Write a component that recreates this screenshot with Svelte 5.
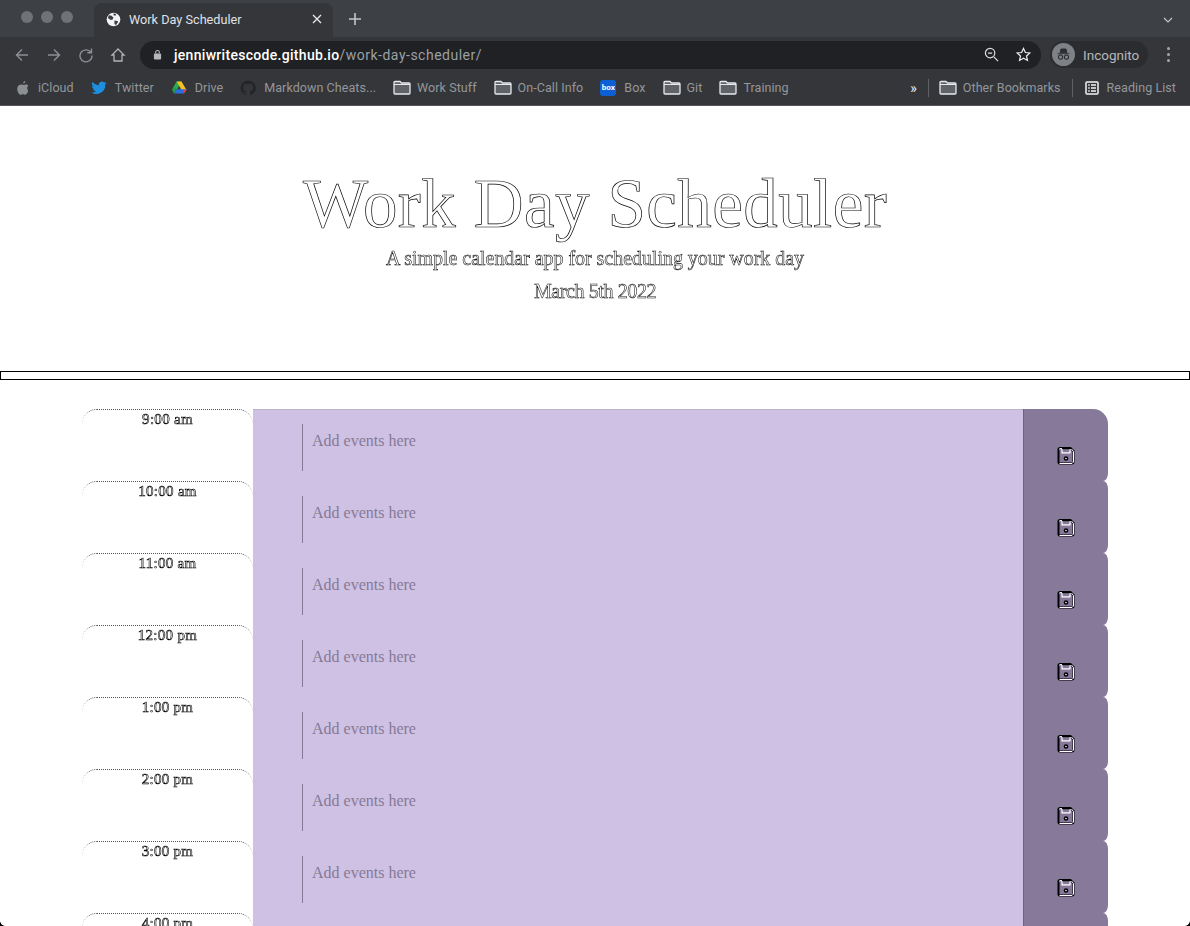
<script>
  const bookmarks = [
    { name: "iCloud", icon: "apple" },
    { name: "Twitter", icon: "twitter" },
    { name: "Drive", icon: "drive" },
    { name: "Markdown Cheats...", icon: "github" },
    { name: "Work Stuff", icon: "folder" },
    { name: "On-Call Info", icon: "folder" },
    { name: "Box", icon: "box" },
    { name: "Git", icon: "folder" },
    { name: "Training", icon: "folder" }
  ];
  const hours = ["9:00 am", "10:00 am", "11:00 am", "12:00 pm", "1:00 pm", "2:00 pm", "3:00 pm", "4:00 pm"];
</script>

{#snippet folder()}
  <svg class="bm-icon" viewBox="0 0 18 15" width="18" height="15">
    <path d="M1 2.500a1 1 0 0 1 1-1h5l1.500 1.500H16a1 1 0 0 1 1 1V13a1 1 0 0 1-1 1H2a1 1 0 0 1-1-1z" fill="#5f6368" stroke="#e8eaed" stroke-width="1.300"/>
    <path d="M1 4.500h16" stroke="#e8eaed" stroke-width="1"/>
  </svg>
{/snippet}

<div class="window">
  <div class="tabstrip">
    <div class="lights"><i></i><i></i><i></i></div>
    <div class="tab">
      <svg viewBox="0 0 16 16" width="15" height="15">
        <circle cx="8" cy="8" r="7.300" fill="#f1f3f4"/>
        <path d="M3 3.500l3 .5 2 2-1 2-2 .5-3-2zM9 9l3 .5 1 1-2.500 3.500-1.500-1.500zM8 1.500l3 .5-1 2-2-.5z" fill="#3c4043"/>
      </svg>
      <span class="tab-title">Work Day Scheduler</span>
      <svg class="tab-x" viewBox="0 0 10 10" width="10" height="10"><path d="M1 1l8 8M9 1l-8 8" stroke="#e8eaed" stroke-width="1.300"/></svg>
    </div>
    <svg class="plus" viewBox="0 0 12 12" width="12" height="12"><path d="M6 0v12M0 6h12" stroke="#c4c7c9" stroke-width="1.600"/></svg>
    <svg class="chev" viewBox="0 0 10 6" width="10" height="6"><path d="M1 1l4 4 4-4" fill="none" stroke="#c4c7c9" stroke-width="1.200"/></svg>
  </div>

  <div class="toolbar">
    <svg class="nav" viewBox="0 0 16 16" width="16" height="16"><path d="M14 8H2.500M8 2.500L2.500 8 8 13.500" fill="none" stroke="#8b8f93" stroke-width="1.400"/></svg>
    <svg class="nav" viewBox="0 0 16 16" width="16" height="16"><path d="M2 8h11.500M8 2.500L13.500 8 8 13.500" fill="none" stroke="#8b8f93" stroke-width="1.400"/></svg>
    <svg class="nav" viewBox="0 0 16 16" width="16" height="16"><path d="M13 5.500A6 6 0 1 0 14 8.500M13.500 1.500v4.200H9.300" fill="none" stroke="#8b8f93" stroke-width="1.400"/></svg>
    <svg class="nav" viewBox="0 0 16 16" width="16" height="16"><path d="M8 2L2 8h2v6h8V8h2z" fill="none" stroke="#b0b3b6" stroke-width="1.300"/></svg>
    <div class="omnibox">
      <svg viewBox="0 0 10 12" width="9" height="11"><rect x="1" y="5" width="8" height="6.500" rx="1" fill="#b5b8bb"/><path d="M3 5V3.500a2 2 0 0 1 4 0V5" fill="none" stroke="#b5b8bb" stroke-width="1.200"/></svg>
      <span class="url"><b>jenniwritescode.github.io</b>/work-day-scheduler/</span>
      <svg class="zoom-ic" viewBox="0 0 16 16" width="15" height="15"><circle cx="6.500" cy="6.500" r="5" fill="none" stroke="#dadce0" stroke-width="1.300"/><path d="M10.500 10.500l4.500 4.500M4.300 6.500h4.400" stroke="#dadce0" stroke-width="1.300"/></svg>
      <svg class="star" viewBox="0 0 16 16" width="15" height="15"><path d="M8 1.500l2 4.400 4.700.5-3.500 3.200 1 4.700L8 11.900l-4.200 2.400 1-4.700L1.300 6.400l4.700-.5z" fill="none" stroke="#e8eaed" stroke-width="1.300"/></svg>
    </div>
    <div class="incognito">
      <span class="inc-avatar">
        <svg viewBox="0 0 20 20" width="17" height="17"><path d="M3 9h14M6 8l1-4.500h6L14 8z" fill="#2b2d30" stroke="#2b2d30"/><circle cx="6.500" cy="13" r="2.500" fill="none" stroke="#2b2d30" stroke-width="1.200"/><circle cx="13.500" cy="13" r="2.500" fill="none" stroke="#2b2d30" stroke-width="1.200"/></svg>
      </span>
      <span>Incognito</span>
    </div>
    <div class="dots"><i></i><i></i><i></i></div>
  </div>

  <div class="bookmarks">
    {#each bookmarks as b}
      <span class="bm" class:is-folder={b.icon === "folder"}>
        {#if b.icon === "folder"}
          {@render folder()}
        {:else if b.icon === "apple"}
          <svg class="bm-icon" viewBox="0 0 14 16" width="14" height="15"><path d="M9.500 1c.2 1.500-1 2.800-2.300 2.800C7 2.400 8.200 1.100 9.500 1zM11.500 8.300c0-1.500 1.200-2.200 1.300-2.300-.8-1.100-2-1.300-2.400-1.300-1-.1-2 .6-2.600.6s-1.400-.6-2.300-.6C3 4.700.8 6.200.8 9.500c0 3 2.200 6.200 3.600 6.200.8 0 1.400-.6 2.500-.6s1.500.6 2.500.6c1.400 0 2.900-2.700 3.200-4-.1 0-1.100-1.300-1.100-3.400z" fill="#8d9093"/></svg>
        {:else if b.icon === "twitter"}
          <svg class="bm-icon" viewBox="0 0 16 14" width="16" height="14"><path d="M15.500 2c-.6.300-1.200.4-1.800.5.600-.4 1.100-1 1.400-1.700-.6.400-1.300.6-2 .8A3.100 3.100 0 0 0 7.800 4.400 8.900 8.900 0 0 1 1.400 1.100a3.100 3.100 0 0 0 1 4.200c-.5 0-1-.2-1.400-.4 0 1.500 1 2.800 2.500 3.100-.5.100-.9.100-1.400 0 .4 1.300 1.500 2.100 2.900 2.200A6.300 6.300 0 0 1 .5 11.500 8.900 8.900 0 0 0 14.200 3.600c.5-.4 1-.9 1.300-1.600z" fill="#1d8fe0"/></svg>
        {:else if b.icon === "drive"}
          <svg class="bm-icon" viewBox="0 0 16 14" width="16" height="15"><path d="M5.500 1h5L6 9H1z" fill="#2da94f"/><path d="M10.500 1L15.500 9.500h-5L5.700 1z" fill="#f6bf26"/><path d="M3 13l2.500-4.200h10L13 13z" fill="#2a6ee0"/><path d="M1 9.500L3 13l2.600-4.200-2-2.300z" fill="#1e9e48"/><path d="M13 13l2.500-3.800h-3z" fill="#e8453c"/></svg>
        {:else if b.icon === "github"}
          <svg class="bm-icon" viewBox="0 0 16 16" width="16" height="16"><path d="M8 .5a7.500 7.500 0 0 0-2.400 14.600c.4.100.5-.2.500-.4v-1.300c-2.100.5-2.500-1-2.500-1-.4-.9-.9-1.100-.9-1.100-.7-.5 0-.5 0-.5.800.1 1.200.8 1.200.8.700 1.200 1.800.8 2.300.6.100-.5.300-.8.500-1-1.700-.2-3.400-.8-3.400-3.700 0-.8.300-1.500.8-2-.1-.2-.3-1 .1-2 0 0 .6-.2 2.100.8a7 7 0 0 1 3.800 0c1.500-1 2.100-.8 2.100-.8.400 1 .2 1.800.1 2 .5.500.8 1.200.8 2 0 2.900-1.800 3.500-3.400 3.700.3.200.5.700.5 1.400v2.100c0 .2.100.5.500.4A7.500 7.500 0 0 0 8 .5z" fill="#232528"/></svg>
        {:else}
          <span class="box-ic">box</span>
        {/if}
        <span>{b.name}</span>
      </span>
    {/each}
    <span class="more">»</span>
    <span class="sep"></span>
    <span class="bm is-folder other">{@render folder()}<span>Other Bookmarks</span></span>
    <span class="sep sep-b"></span>
    <span class="bm reading">
      <svg class="bm-icon" viewBox="0 0 14 14" width="14" height="14"><rect x="1" y="1" width="12" height="12" rx="1" fill="none" stroke="#f1f3f4" stroke-width="1.500"/><path d="M3.200 4h1.500M6 4h5M3.200 7h1.500M6 7h5M3.200 10h1.500M6 10h5" stroke="#f1f3f4" stroke-width="1.300"/></svg>
      <span>Reading List</span>
    </span>
  </div>

  <main class="page">
    <header class="jumbotron">
      <h1>Work Day Scheduler</h1>
      <p class="lead">A simple calendar app for scheduling your work day</p>
      <p class="lead date">March 5th 2022</p>
    </header>
    <div class="rule"></div>
    <div class="container">
      {#each hours as hour}
        <div class="row">
          <div class="hour">{hour}</div>
          <div class="desc">
            <textarea placeholder="Add events here"></textarea>
          </div>
          <button class="save" aria-label="Save">
            <svg viewBox="0 0 20 20" width="20" height="20">
              <path d="M2.500 3.500a1.500 1.500 0 0 1 1.500-1.500h10.500l3 3v11a1.500 1.500 0 0 1-1.500 1.500H4a1.500 1.500 0 0 1-1.500-1.500z" fill="none" stroke="#000" stroke-width="2"/>
              <path d="M3.500 17.500H16l1.500-1.500V5.500l-2-2.500" fill="none" stroke="#fff" stroke-width="1"/>
              <path d="M3 3.500L4 2.600h2" fill="none" stroke="#fff" stroke-width="1"/>
              <path d="M6 3v3.800h8V3" fill="none" stroke="#fff" stroke-width="1.200"/>
              <path d="M6 2.500h8" fill="none" stroke="#000" stroke-width="1.400"/>
              <circle cx="10" cy="12.500" r="2.300" fill="#000"/>
              <circle cx="10" cy="12.500" r=".8" fill="#fff"/>
            </svg>
          </button>
        </div>
      {/each}
    </div>
  </main>
</div>

<style>
  :global(body) {
    margin: 0;
    background: #000;
    overflow: hidden;
  }

  .window {
    width: 1190px;
    height: 926px;
    overflow: hidden;
    font-family: Roboto, "Liberation Sans", sans-serif;
    display: flex;
    flex-direction: column;
    border-radius: 0 0 6px 6px;
    background: #fff;
  }

  /* ---- browser chrome ---- */
  .tabstrip {
    height: 37px;
    background: #3d4145;
    display: flex;
    align-items: flex-end;
    flex-shrink: 0;
    position: relative;
  }

  .lights {
    display: flex;
    gap: 8px;
    padding: 0 20px 0 21px;
    align-self: flex-start;
    margin-top: 11px;
  }

  .lights i {
    width: 12px;
    height: 12px;
    border-radius: 50%;
    background: #6f7276;
  }

  .tab {
    width: 239px;
    height: 34px;
    padding: 0 11px 2px 12px;
    box-sizing: border-box;
    background: #35363a;
    border-radius: 8px 8px 0 0;
    display: flex;
    align-items: center;
    gap: 8px;
    margin-left: 1px;
  }

  .tab-title {
    flex: 1;
    color: #dfe1e5;
    font-size: 12.700px;
  }

  .plus {
    margin: 0 0 12px 16px;
  }

  .chev {
    position: absolute;
    right: 17px;
    top: 17px;
  }

  .toolbar {
    height: 35px;
    background: #35363a;
    display: flex;
    align-items: center;
    flex-shrink: 0;
    padding-left: 14px;
  }

  .nav {
    margin-right: 16px;
    flex-shrink: 0;
  }

  .omnibox {
    width: 901px;
    height: 28px;
    margin-left: -2px;
    background: #202124;
    border-radius: 14px;
    display: flex;
    align-items: center;
    padding: 0 10px 0 13px;
    box-sizing: border-box;
  }

  .url {
    flex: 1;
    margin-left: 12px;
    font-size: 14px;
    color: #9aa0a6;
    letter-spacing: 0.5px;
  }

  .url b {
    font-weight: 500;
    color: #fff;
    letter-spacing: 0.3px;
  }

  .star {
    margin-left: 17px;
  }

  .incognito {
    margin-left: 9px;
    width: 98px;
    height: 27px;
    border-radius: 14px;
    background: #2b2c30;
    color: #b5b8bb;
    font-size: 13.500px;
    display: flex;
    align-items: center;
    gap: 8px;
    padding-left: 2px;
    box-sizing: border-box;
  }

  .inc-avatar {
    width: 23px;
    height: 23px;
    border-radius: 50%;
    background: #7e8185;
    display: flex;
    align-items: center;
    justify-content: center;
  }

  .dots {
    margin-left: 19px;
    display: flex;
    flex-direction: column;
    gap: 3px;
  }

  .dots i {
    width: 3px;
    height: 3px;
    border-radius: 50%;
    background: #a4a7aa;
  }

  .bookmarks {
    height: 31px;
    padding: 0 0 2px 16px;
    background: #35363a;
    border-bottom: 1px solid #55575a;
    flex-shrink: 0;
    display: flex;
    align-items: center;
    color: #94979b;
    font-size: 12.500px;
    letter-spacing: 0.07px;
  }

  .bm {
    display: flex;
    align-items: center;
    gap: 8px;
    margin-right: 17px;
    white-space: nowrap;
  }

  .bm.is-folder {
    gap: 6px;
  }

  .bm-icon {
    flex-shrink: 0;
  }

  .box-ic {
    width: 16px;
    height: 16px;
    border-radius: 3px;
    background: #0d5fd6;
    color: #fff;
    font-size: 8px;
    font-weight: 700;
    line-height: 16px;
    text-align: center;
  }

  .more {
    margin-left: auto;
    color: #e8eaed;
    font-size: 14px;
    margin-right: 11px;
  }

  .sep {
    width: 1px;
    height: 18px;
    background: #5f6266;
    margin-right: 10px;
  }

  .other {
    margin-right: 11px;
  }

  .sep-b {
    margin-right: 12px;
  }

  .reading {
    margin-right: 14px;
  }

  /* ---- page ---- */
  .page {
    flex: 1;
    background: #fff;
    font-family: "Liberation Serif", "DejaVu Serif", serif;
  }

  .jumbotron {
    height: 265px;
    box-sizing: border-box;
    padding-top: 63px;
    text-align: center;
  }

  h1 {
    margin: 0 0 3px;
    font-size: 69px;
    font-weight: 400;
    line-height: 70px;
    letter-spacing: 0.4px;
    color: #fff;
    -webkit-text-stroke: 0.7px #000;
    will-change: transform;
  }

  .lead {
    margin: 0;
    font-size: 20px;
    line-height: 33px;
    color: #fff;
    -webkit-text-stroke: 0.55px #111;
    letter-spacing: -0.04px;
    will-change: transform;
  }

  .date {
    letter-spacing: -0.4px;
  }

  .rule {
    height: 7px;
    border: 1px solid #000;
    width: 1188px;
  }

  .container {
    margin: 29px 82px 0;
  }

  .row {
    display: flex;
    height: 72px;
  }

  .hour {
    width: 171px;
    box-sizing: border-box;
    border-top: 1px dotted #555;
    border-radius: 15px 15px 0 0;
    text-align: center;
    font-size: 15px;
    line-height: 18px;
    color: #fff;
    -webkit-text-stroke: 0.6px #000;
    letter-spacing: 0.3px;
    will-change: transform;
  }

  .desc {
    width: 770px;
    box-sizing: border-box;
    background: #cfc1e3;
    padding: 15px 0 0 49px;
  }

  .row:first-child .desc {
    border-top: 1px solid #b9b5c2;
    padding-top: 14px;
  }

  textarea {
    display: block;
    width: 700px;
    height: 47px;
    box-sizing: border-box;
    border: none;
    border-left: 1px solid #857a96;
    background: transparent;
    padding: 7px 9px;
    resize: none;
    font-family: "Liberation Serif", "DejaVu Serif", serif;
    font-size: 16px;
    line-height: 20px;
    outline: none;
  }

  textarea::placeholder {
    color: #857a96;
    opacity: 1;
  }

  .save {
    width: 85px;
    padding: 0;
    border: none;
    border-left: 1px solid #6d6280;
    border-radius: 0 5px 5px 0 / 0 8px 8px 0;
    background: #86799a;
    display: flex;
    align-items: center;
    justify-content: center;
  }

  .row:first-child .save {
    border-top-right-radius: 15px;
  }

  .save svg {
    margin-top: 21px;
  }
</style>
